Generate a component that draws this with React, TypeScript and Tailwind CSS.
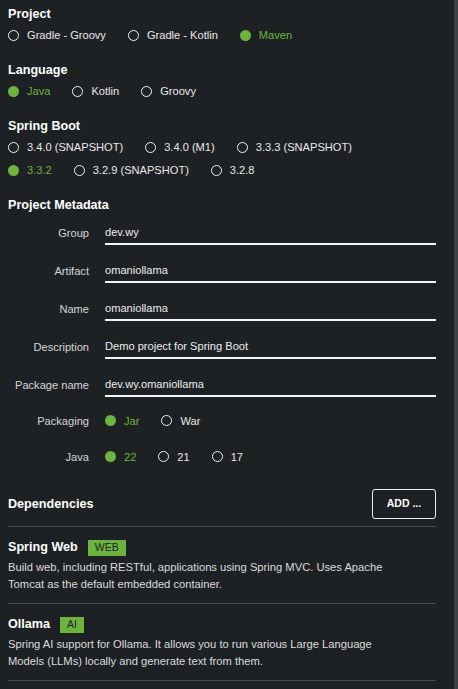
import React from "react";

function Radio({ label, checked }: { label: string; checked?: boolean }) {
  return (
    <div className="flex items-center mr-[22px]">
      {checked ? (
        <span className="w-[11px] h-[11px] rounded-full bg-[#6db33f] shrink-0" />
      ) : (
        <span className="w-[11px] h-[11px] rounded-full border-[1.5px] border-[#f2f2f2] shrink-0" />
      )}
      <span className={"ml-[8px] text-[11.1px] " + (checked ? "text-[#6db33f]" : "text-[#e8e8e8]")}>{label}</span>
    </div>
  );
}

function Section({ title, rows }: { title: string; rows: { label: string; checked?: boolean }[][] }) {
  return (
    <div className="mb-[14px]">
      <div className="h-[18px] leading-[18px] text-[12.6px] font-bold text-white mb-[1px]">{title}</div>
      {rows.map((r, i) => (
        <div key={i} className="h-[23px] flex items-center">
          {r.map((o) => (
            <Radio key={o.label} label={o.label} checked={o.checked} />
          ))}
        </div>
      ))}
    </div>
  );
}

function Field({ label, value, mb }: { label: string; value: string; mb: string }) {
  return (
    <div className={"flex items-center h-[24px] " + mb}>
      <div className="w-[81px] text-right text-[11.1px] text-[#d6d6d6]">{label}</div>
      <div className="ml-[16px] flex-1 h-[24px] border-b-2 border-[#f5f5f5] flex items-center text-[11.1px] text-[#ececec]">
        {value}
      </div>
    </div>
  );
}

function RadioField({ label, options }: { label: string; options: { label: string; checked?: boolean }[] }) {
  return (
    <div className="flex items-center h-[24px] mb-[12px]">
      <div className="w-[81px] text-right text-[11.1px] text-[#d6d6d6]">{label}</div>
      <div className="ml-[16px] flex items-center">
        {options.map((o) => (
          <Radio key={o.label} label={o.label} checked={o.checked} />
        ))}
      </div>
    </div>
  );
}

function Dep({ name, tag, desc }: { name: string; tag: string; desc: React.ReactNode }) {
  return (
    <div className="border-b border-[#46494e] pt-[12px] pb-[11px]">
      <div className="flex items-center h-[17px]">
        <span className="text-[12.6px] font-bold text-white">{name}</span>
        <span className="ml-[10px] h-[16px] px-[7px] flex items-center bg-[#6db33f] text-[10.5px] text-[#1e2124]">
          {tag}
        </span>
      </div>
      <div className="mt-[3px] text-[11.2px] leading-[16.5px] text-[#dcdcdc]">{desc}</div>
    </div>
  );
}

export default function App() {
  return (
    <div
      className="w-[458px] h-[689px] bg-[#1e2124] flex overflow-hidden"
      style={{ fontFamily: '"Liberation Sans", Arial, sans-serif' }}
    >
      <div className="flex-1 pl-[8px] pr-[18px] pt-[5px]">
        <Section
          title="Project"
          rows={[[{ label: "Gradle - Groovy" }, { label: "Gradle - Kotlin" }, { label: "Maven", checked: true }]]}
        />
        <Section
          title="Language"
          rows={[[{ label: "Java", checked: true }, { label: "Kotlin" }, { label: "Groovy" }]]}
        />
        <Section
          title="Spring Boot"
          rows={[
            [{ label: "3.4.0 (SNAPSHOT)" }, { label: "3.4.0 (M1)" }, { label: "3.3.3 (SNAPSHOT)" }],
            [{ label: "3.3.2", checked: true }, { label: "3.2.9 (SNAPSHOT)" }, { label: "3.2.8" }],
          ]}
        />
        <div className="h-[18px] leading-[18px] text-[12.6px] font-bold text-white mb-[7px]">Project Metadata</div>
        <Field label="Group" value="dev.wy" mb="mb-[14px]" />
        <Field label="Artifact" value="omaniollama" mb="mb-[14px]" />
        <Field label="Name" value="omaniollama" mb="mb-[14px]" />
        <Field label="Description" value="Demo project for Spring Boot" mb="mb-[14px]" />
        <Field label="Package name" value="dev.wy.omaniollama" mb="mb-[12px]" />
        <RadioField label="Packaging" options={[{ label: "Jar", checked: true }, { label: "War" }]} />
        <RadioField label="Java" options={[{ label: "22", checked: true }, { label: "21" }, { label: "17" }]} />
        <div className="mt-[20px] flex items-center justify-between h-[30px]">
          <span className="text-[12.6px] font-bold text-white">Dependencies</span>
          <button className="w-[64px] h-[30px] border border-[#f0f0f0] rounded-[3px] text-[10.5px] font-bold text-white">
            ADD ...
          </button>
        </div>
        <div className="mt-[7px] border-t border-[#46494e]" />
        <Dep
          name="Spring Web"
          tag="WEB"
          desc={
            <>
              Build web, including RESTful, applications using Spring MVC. Uses Apache
              <br />
              Tomcat as the default embedded container.
            </>
          }
        />
        <Dep
          name="Ollama"
          tag="AI"
          desc={
            <>
              Spring AI support for Ollama. It allows you to run various Large Language
              <br />
              Models (LLMs) locally and generate text from them.
            </>
          }
        />
      </div>
      <div className="w-[4px] bg-[#3c4045]" />
    </div>
  );
}
